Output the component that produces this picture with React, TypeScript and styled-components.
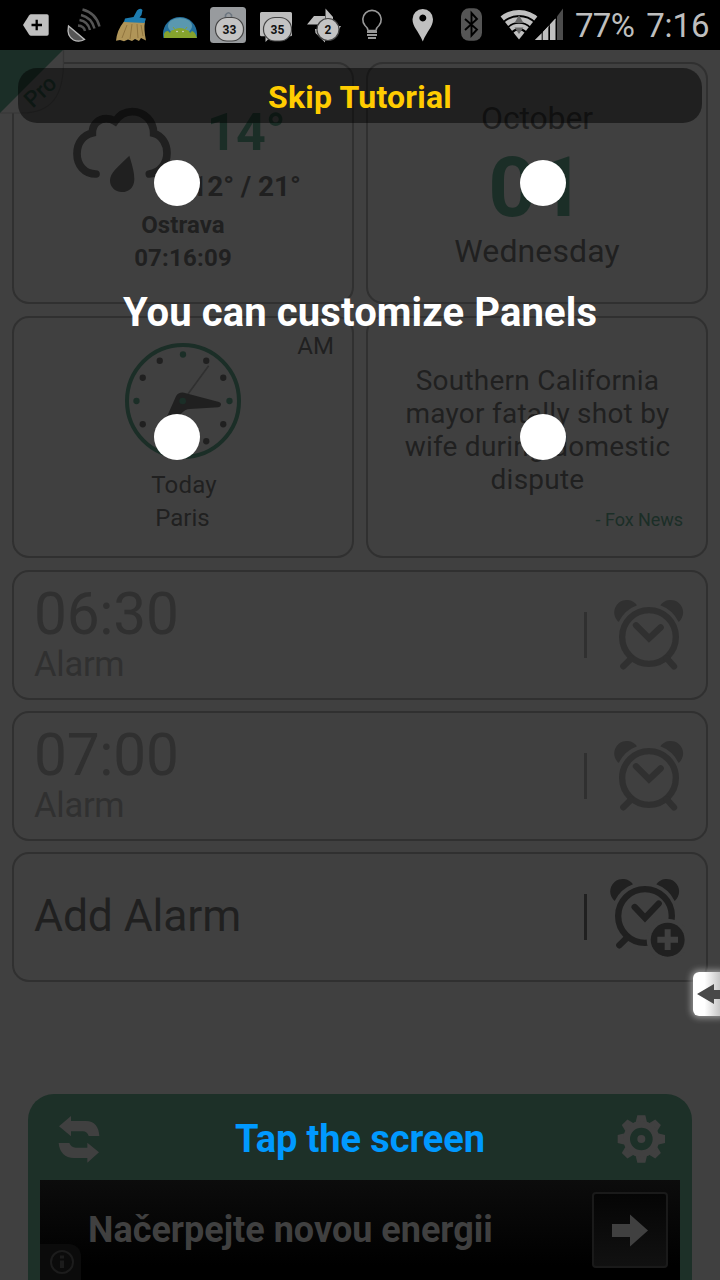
import React from "react";
import styled, { createGlobalStyle } from "styled-components";

const INK = "#202020";
const FADED = "#303030";
const GREEN = "#1b2e27";
const BG = "#404040";

const Global = createGlobalStyle`
  * { box-sizing: border-box; }
  body { margin: 0; background: ${BG}; font-family: Roboto, "Liberation Sans", sans-serif; }
`;

const Screen = styled.div`
  position: relative;
  width: 720px;
  height: 1280px;
  overflow: hidden;
  display: flex;
  flex-direction: column;
  background: ${BG};
`;

const Text = styled.span<{ $size: number; $line: number; $weight?: number; $color?: string; $track?: number; $top?: number; $shift?: number }>`
  display: block;
  white-space: pre;
  font-size: ${(p) => p.$size}px;
  line-height: ${(p) => p.$line}px;
  font-weight: ${(p) => p.$weight ?? 400};
  color: ${(p) => p.$color ?? INK};
  letter-spacing: ${(p) => p.$track ?? 0}px;
  margin-top: ${(p) => p.$top ?? 0}px;
  margin-left: ${(p) => p.$shift ?? 0}px;
`;

const StatusBar = styled.header`
  height: 50px;
  flex: none;
  display: flex;
  background: #000;
`;

const StatusReadout = styled.div`
  display: flex;
  gap: 12px;
  padding: 6px 0 0 10px;
`;

const Content = styled.main`
  flex: 1;
  display: flex;
  flex-direction: column;
  padding: 12px 12px 0;
`;

const PanelGrid = styled.section`
  display: grid;
  grid-template-columns: 342px 342px;
  grid-auto-rows: 242px;
  gap: 12px;
`;

const Panel = styled.article`
  position: relative;
  border: 2px solid ${FADED};
  border-radius: 17px;
  display: flex;
  flex-direction: column;
  align-items: center;
  text-align: center;
`;

const WeatherRow = styled.div`
  display: flex;
  align-self: stretch;
  height: 145px;
  padding: 41px 0 0 58px;
`;

const Temps = styled.div`
  width: 122px;
  margin-left: 13px;
  display: flex;
  flex-direction: column;
  align-items: center;
`;

const Meridiem = styled.div`
  position: absolute;
  right: 18px;
  top: 16px;
`;

const ClockFace = styled.div`
  height: 120px;
  margin-top: 23px;
`;

const Source = styled.div`
  align-self: flex-end;
  margin: 13px 23px 0 0;
`;

const AlarmList = styled.section`
  display: flex;
  flex-direction: column;
  gap: 11px;
  margin-top: 12px;
`;

const AlarmRow = styled.article`
  height: 130px;
  border: 2px solid ${FADED};
  border-radius: 17px;
  display: flex;
  align-items: center;
  padding: 0 17px 0 20px;
`;

const AlarmInfo = styled.div`
  flex: 1;
  height: 106px;
`;

const Divider = styled.i<{ $color: string }>`
  width: 3px;
  height: 46px;
  background: ${(p) => p.$color};
`;

const Footer = styled.footer`
  flex: none;
  width: 664px;
  height: 186px;
  margin: 0 auto;
  padding: 0 12px;
  border-radius: 26px 26px 0 0;
  background: #1d3028;
  display: flex;
  flex-direction: column;
`;

const FooterBar = styled.div`
  height: 86px;
  display: flex;
  align-items: center;
  justify-content: space-between;
  padding: 4px 14px 0 18px;
`;

const Ad = styled.div`
  position: relative;
  flex: 1;
  display: flex;
  justify-content: space-between;
  padding: 12px 12px 0 48px;
  background: linear-gradient(#0c0c0c, #000 85%);
`;

const AdButton = styled.div`
  width: 76px;
  height: 76px;
  border: 2px solid #1a1a1a;
  border-radius: 4px;
  background: linear-gradient(#050505, #111);
`;

const AdInfo = styled.div`
  position: absolute;
  left: 0;
  bottom: 0;
  width: 41px;
  height: 36px;
  border-radius: 0 12px 0 0;
  background: #0b0b0b;
`;

const Overlay = styled.div`
  position: absolute;
  inset: 0;
`;

const SkipButton = styled.div`
  position: absolute;
  left: 18px;
  top: 68px;
  width: 684px;
  height: 55px;
  border-radius: 19px;
  background: rgba(0, 0, 0, 0.49);
  display: flex;
  justify-content: center;
`;

const Hint = styled.div<{ $y: number }>`
  position: absolute;
  left: 0;
  right: 0;
  top: ${(p) => p.$y}px;
  display: flex;
  justify-content: center;
`;

const Dot = styled.i<{ $x: number; $y: number }>`
  position: absolute;
  left: ${(p) => p.$x - 23}px;
  top: ${(p) => p.$y - 23}px;
  width: 46px;
  height: 46px;
  border-radius: 50%;
  background: #fff;
`;

const EdgeTab = styled.div`
  position: absolute;
  right: -6px;
  top: 972px;
  width: 33px;
  height: 44px;
  border-radius: 6px;
  background: linear-gradient(90deg, #fff 35%, #c8c8c8 80%);
  box-shadow: 0 0 6px 2px rgba(255, 255, 255, 0.45);
`;

const ProCorner = styled.div`
  position: absolute;
  left: 0;
  top: 50px;
  width: 66px;
  height: 66px;
`;

const ProLabel = styled.div`
  position: absolute;
  left: 15px;
  top: 28px;
  width: 50px;
  display: flex;
  justify-content: center;
  transform: rotate(-43deg);
`;

const StatusIcons = () => (
  <svg width="565" height="50" viewBox="0 0 565 50">
    <path d="M23 25 29 15.5Q30 14.3 31 14.3H47Q48.700 14.300 48.700 16V34Q48.700 35.700 47 35.700H31Q30 35.700 29 34.500Z" fill="#c0c0c0" />
    <path d="M31.500 25H42M36.700 19.700V30.300" stroke="#000" strokeWidth="2.300" />
    <g fill="none" stroke="#555" strokeWidth="2.400">
      <path d="M78 25.500Q84 26 85 31" stroke="#505050" />
      <path d="M79.500 20Q88 21.500 90 30" />
      <path d="M81 15Q91.500 17.500 94.500 28.500" />
      <path d="M82.500 9.500Q96 13 99.500 26.500" />
    </g>
    <path d="M68.500 26Q66.500 36 73.500 40Q79 42.500 84.500 39.500Z" fill="#555" stroke="#bbb" strokeWidth="1.300" />
    <path d="M124 21.500H145Q143.500 29 146 40.500L141 38 139 41 135 39 132 41 128 39.500 124 41.300 120 40 116 40.800Q117 30 124 21.500Z" fill="#b09558" />
    <path d="M127 25 122 38M132 24 130 39M137 24 138 38M141 25 143 36" stroke="#8c713b" strokeWidth=".9" />
    <path d="M125 18.500 133.500 17 137 10.500Q140 7.500 142.500 10L141.500 15 139.500 17.500 146 18.500 144.500 23 124 22Z" fill="#1d7cb0" />
    <clipPath id="dome"><rect x="160" y="10" width="40" height="28" /></clipPath>
    <g clipPath="url(#dome)">
      <circle cx="180" cy="34" r="17" fill="#236f9c" />
      <ellipse cx="180" cy="26" rx="12" ry="8" fill="#5a98af" />
      <path d="M164 38V34Q165 31 168 31L170 33Q171 29.500 174 30Q176 28 180 28T186 30Q189 29.500 190 33L192 31Q195 31.500 197 38Z" fill="#86a32d" />
      <path d="M173 27 176 31M187 27 184 31" stroke="#86a32d" />
      <circle cx="177" cy="31.500" r=".8" fill="#ddd" /><circle cx="183" cy="31.500" r=".8" fill="#ddd" />
    </g>
    <rect x="210" y="7" width="36" height="36" rx="3.500" fill="#989b9e" />
    <path d="M225.500 18V15Q228.500 10.500 231.500 15V18" fill="none" stroke="#6d7780" strokeWidth="1.600" />
    <path d="M261.500 12H290.500Q292 12 292 13.500V35Q292 36.300 290.500 36.300H271L265.500 42V36.300H261.500Q260 36.300 260 35V13.500Q260 12 261.500 12Z" fill="#bdbdbd" />
    <path d="M325.500 8.500 333 17V26H325.500ZM307 24.500 314 16H325V24.500ZM315 29H325V42.500L315.500 33ZM324 26H341L336 34H324Z" fill="#bdbdbd" />
    <g fill="#c4c4c4" stroke="#444" strokeWidth="1.200">
      <rect x="215.500" y="17.500" width="28" height="23.500" rx="11.500" />
      <rect x="263.500" y="17.500" width="28" height="23.500" rx="11.500" />
      <circle cx="328" cy="29.500" r="11" />
    </g>
    <g fill="#111" fontSize="12" fontWeight="700" textAnchor="middle" fontFamily="Roboto, sans-serif">
      <text x="229.500" y="34">33</text><text x="277.500" y="34">35</text><text x="328" y="34">2</text>
    </g>
    <path d="M368 30.500Q368 28 365 25.500A9.200 9.200 0 1 1 379 25.500Q376 28 376 30.500Z" fill="none" stroke="#999" strokeWidth="1.600" />
    <path d="M367 32H377M367 35H377M368 38H376" stroke="#999" strokeWidth="1.900" />
    <path fillRule="evenodd" d="M422.800 9A10.200 10.200 0 0 1 433 19.300C433 27 427 31 422.800 41.500C418.500 31 412.500 27 412.500 19.300A10.200 10.200 0 0 1 422.800 9ZM422.800 14.500a3.500 3.500 0 1 0 .01 0Z" fill="#c0c0c0" />
    <rect x="461" y="8.300" width="21" height="32.500" rx="8" fill="#555" />
    <path d="M465 19 477 29.500 471.500 35.500V13L477 19 465 30" fill="none" stroke="#000" strokeWidth="1.900" />
    <clipPath id="fan"><path d="M519 39.500 495 9.500 543 9.500Z" /></clipPath>
    <g clipPath="url(#fan)" fill="none" stroke="#c0c0c0" strokeWidth="5.200">
      <circle cx="519" cy="39" r="26.500" /><circle cx="519" cy="39" r="19.500" /><circle cx="519" cy="39" r="13" strokeWidth="4.600" />
      <circle cx="519" cy="39" r="8.500" stroke="none" fill="#c0c0c0" />
    </g>
    <path d="M519 15 523.500 23H514.500ZM514.500 27.500H523.500L519 34Z" fill="#686868" />
    <path d="M535 40 541.500 33.500V40ZM543 32 548.500 26V40H543ZM550 24.500 555.500 18.500V40H550Z" fill="#c0c0c0" />
    <path d="M535 40 541.500 33.500 548.500 26 555.500 18.500V20L543 33V40Z" fill="#c0c0c0" />
    <path d="M542.200 30V40M549.200 20V40" stroke="#000" />
    <path d="M557 16.500 563 8.500V40H557Z" fill="#4c4c4c" />
  </svg>
);

const WeatherIcon = () => (
  <svg width="100" height="90" viewBox="216 165 300 270" fill="none" stroke={INK} strokeWidth="23" strokeLinecap="round">
    <path d="M288 372C253 372 231 345 231 311C231 278 251 255 277 249C277 222 296 206 319 206Q333 206 345 214C358 195 376 185 397 185C434 185 461 214 461 250C486 257 501 282 501 309C501 341 480 368 448 372" strokeLinejoin="miter" />
    <path d="M388 317C400 356 403 370 403 389C402 413 386 426 366 426C344 426 330 411 330 391C331 368 350 354 388 317Z" fill={INK} stroke="none" />
  </svg>
);

const Clock = () => (
  <svg width="120" height="120" viewBox="69 63 360 360">
    <circle cx="249" cy="243" r="168" fill="none" stroke={GREEN} strokeWidth="12" />
    {Array.from({ length: 12 }, (_, i) => (
      <circle key={i} cx={249 + 139.5 * Math.sin((i * Math.PI) / 6)} cy={243 - 139.5 * Math.cos((i * Math.PI) / 6)} r="9.500" fill={i % 3 ? INK : GREEN} />
    ))}
    <path d="M264 222 326 137" stroke={FADED} strokeWidth="5" />
    <path d="M228 229Q235 216 252 218L357 246Q364 248 363 254T355 262L270 267Q255 267 242 283L180 345 172 340 204 283Z" fill={INK} />
    <circle cx="248" cy="243" r="10" fill={GREEN} />
  </svg>
);

const AlarmClock = ({ color, add }: { color: string; add?: boolean }) => (
  <svg width="80" height="84" viewBox="146 76 240 252" fill="none" stroke={color} strokeLinecap="round" strokeWidth="19">
    <circle cx="266" cy="202" r="80.500" />
    <path d={add ? "M235 175 266 208 307 165" : "M227 167 266 206 301 173"} />
    <path d="M212 267 189 290M320 267 341 290" strokeWidth="19" />
    <path d="M175 157A37.500 37.500 0 1 1 230 107A101 101 0 0 0 175 157ZM355 157A37.500 37.500 0 1 0 300 107A101 101 0 0 1 355 157Z" fill={color} stroke="none" />
    {add && (
      <g stroke="none">
        <circle cx="334" cy="273" r="63" fill={BG} />
        <circle cx="334" cy="273" r="51" fill={color} />
        <path d="M303 273H365M334 242V304" stroke={BG} strokeWidth="18" strokeLinecap="butt" />
      </g>
    )}
  </svg>
);

const ClockSlot = styled.div<{ $left: number; $drop: number }>`
  margin: ${(p) => p.$drop}px 0 0 ${(p) => p.$left}px;
  width: ${(p) => 102 - p.$left}px;
  height: 84px;
`;

const Gear = () => (
  <svg width="50" height="50" viewBox="-76 -75 150 150" fill={BG}>
    {Array.from({ length: 8 }, (_, i) => (
      <path key={i} transform={`rotate(${i * 45})`} d="M-18-46-12-71H12L18-46Z" />
    ))}
    <circle r="44" fill="none" stroke={BG} strokeWidth="20" />
    <circle r="12" />
  </svg>
);

const alarms = ["06:30", "07:00"];
const dots = [[177, 183], [543, 183], [177, 437], [543, 437]];

export default function App() {
  return (
    <Screen>
      <Global />
      <StatusBar>
        <StatusIcons />
        <StatusReadout>
          <Text $size={33} $line={40} $color="#bebebe" $track={-0.7}>77%</Text>
          <Text $size={33} $line={40} $color="#bebebe" $track={-0.1}>7:16</Text>
        </StatusReadout>
      </StatusBar>
      <Content>
        <PanelGrid>
          <Panel>
            <WeatherRow>
              <WeatherIcon />
              <Temps>
                <Text $size={52} $line={56} $weight={700} $color={GREEN} $track={-0.5}>14°</Text>
                <Text $size={28} $line={32} $weight={700} $top={10} $track={-0.1}>12° / 21°</Text>
              </Temps>
            </WeatherRow>
            <Text $size={24} $line={33} $weight={700} $track={0.1}>Ostrava</Text>
            <Text $size={24} $line={33} $weight={700} $track={0.2}>07:16:09</Text>
          </Panel>
          <Panel>
            <Text $size={32} $line={38} $top={35} $track={-0.15}>October</Text>
            <Text $size={84} $line={90} $top={6} $weight={700} $color={GREEN} $shift={-1}>01</Text>
            <Text $size={32} $line={38} $top={-1} $track={0.1}>Wednesday</Text>
          </Panel>
          <Panel>
            <Meridiem><Text $size={24} $line={24} $track={0.1}>AM</Text></Meridiem>
            <ClockFace><Clock /></ClockFace>
            <Text $size={24} $line={33} $top={8} $shift={2} $track={0.2}>Today</Text>
            <Text $size={24} $line={33} $shift={-1}>Paris</Text>
          </Panel>
          <Panel>
            <Text $size={28} $line={33} $top={46} $track={0.24} $shift={1}>{"Southern California\nmayor fatally shot by\nwife during domestic\ndispute"}</Text>
            <Source><Text $size={18} $line={22} $color={GREEN} $track={-0.05}>- Fox News</Text></Source>
          </Panel>
        </PanelGrid>
        <AlarmList>
          {alarms.map((time) => (
            <AlarmRow key={time}>
              <AlarmInfo>
                <Text $size={58.5} $line={58} $top={3} $track={-0.2} $color={FADED}>{time}</Text>
                <Text $size={34.5} $line={36} $top={3} $track={-0.25} $color={FADED}>Alarm</Text>
              </AlarmInfo>
              <Divider $color={FADED} />
              <ClockSlot $left={22} $drop={4.6}><AlarmClock color={FADED} /></ClockSlot>
            </AlarmRow>
          ))}
          <AlarmRow>
            <AlarmInfo><Text $size={44.5} $line={104} $track={-0.15}>Add Alarm</Text></AlarmInfo>
            <Divider $color={INK} />
            <ClockSlot $left={18} $drop={-2.6}><AlarmClock color={INK} add /></ClockSlot>
          </AlarmRow>
        </AlarmList>
      </Content>
      <Footer>
        <FooterBar>
          <svg width="42" height="48" viewBox="174 105 126 144" fill={BG}>
            <path d="M177 139 213 108V123H258C283 123 297 140 298 168H266Q262 154 248 154H213V169ZM297 217 262 248V234H222C195 234 178 216 176 189H208Q214 203 227 203H262V188Z" />
          </svg>
          <Gear />
        </FooterBar>
        <Ad>
          <Text $size={36} $line={76} $weight={700} $color={BG}>Načerpejte novou energii</Text>
          <AdButton>
            <svg width="72" height="72" viewBox="0 0 72 72"><path d="M18 30H36V20.500L54 36.500 36 52.500V43H18Z" fill={BG} /></svg>
          </AdButton>
          <AdInfo>
            <svg width="41" height="36" viewBox="0 0 41 36" fill="none" stroke="#1c1c1c">
              <circle cx="22" cy="18" r="11" strokeWidth="2" />
              <path d="M22 16.500V24M22 11.500V14.500" strokeWidth="4" />
            </svg>
          </AdInfo>
        </Ad>
      </Footer>
      <ProCorner>
        <svg width="66" height="66" viewBox="0 0 66 66">
          <path d="M0 0H64V12C64 45 52 63 22 63H0Z" fill={BG} />
          <path d="M63.500 0V12C63.500 45 52 63 22 63H0" fill="none" stroke="#363636" strokeWidth="1.200" />
          <path d="M0 0H63L0 63Z" fill={GREEN} />
        </svg>
        <ProLabel><Text $size={22.5} $line={26} $weight={500} $color={GREEN}>Pro</Text></ProLabel>
      </ProCorner>
      <Overlay>
        <SkipButton><Text $size={32} $line={58} $weight={700} $color="#fc0" $track={0.22}>Skip Tutorial</Text></SkipButton>
        {dots.map(([x, y]) => <Dot key={`${x}-${y}`} $x={x} $y={y} />)}
        <Hint $y={292}><Text $size={40} $line={42} $weight={700} $color="#fff" $track={0.12}>You can customize Panels</Text></Hint>
        <Hint $y={1115}><Text $size={38} $line={48} $weight={700} $color="#09f" $track={-0.1}>Tap the screen</Text></Hint>
        <EdgeTab>
          <svg width="33" height="44" viewBox="0 0 33 44"><path d="M4 22 21 12V18H33V27H21V32Z" fill="#484848" /></svg>
        </EdgeTab>
      </Overlay>
    </Screen>
  );
}
